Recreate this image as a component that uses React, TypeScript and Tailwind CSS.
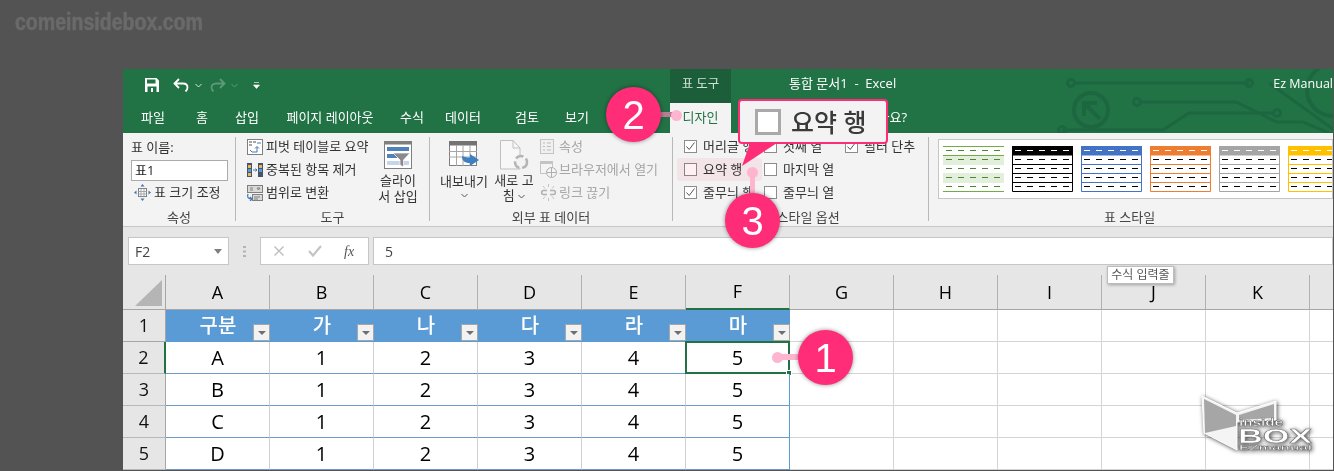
const tabs = [
  { label: '파일', w: 'w-[46px]' },
  { label: '홈', w: 'w-[52px]' },
  { label: '삽입', w: 'w-[38px]' },
  { label: '페이지 레이아웃', w: 'w-[128px]' },
  { label: '수식', w: 'w-[36px]' },
  { label: '데이터', w: 'w-[66px]' },
  { label: '검토', w: 'w-[62px]' },
  { label: '보기', w: 'w-[38px]' },
];

const columns = ['A', 'B', 'C', 'D', 'E', 'F', 'G', 'H', 'I', 'J', 'K', ''];
const headers = ['구분', '가', '나', '다', '라', '마'];
const rows = [
  ['A', '1', '2', '3', '4', '5'],
  ['B', '1', '2', '3', '4', '5'],
  ['C', '1', '2', '3', '4', '5'],
  ['D', '1', '2', '3', '4', '5'],
];

const styles = [
  { line: '#70ad47', head: 'none', dash: '#548235', band: true },
  { line: '#000000', head: '#000000', dash: '#000000', band: false },
  { line: '#4472c4', head: '#4472c4', dash: '#000000', band: false },
  { line: '#ed7d31', head: '#ed7d31', dash: '#000000', band: false },
  { line: '#a5a5a5', head: '#a5a5a5', dash: '#000000', band: false },
  { line: '#ffc000', head: '#ffc000', dash: '#000000', band: false },
];

const StyleThumb = ({ line, head, dash, band }: { line: string; head: string; dash: string; band: boolean }) => {
  const ys = [4.5, 13.5, 22.5, 31.5, 40.5];
  return (
    <svg width="61" height="46" viewBox="0 0 61 46" className="shrink-0">
      {band ? (
        <>
          <rect x="0" y="9" width="61" height="10" fill="#e2efda" />
          <rect x="0" y="27" width="61" height="10" fill="#e2efda" />
          <path d="M0 .5H61M0 9.5H61M0 45.5H61" stroke={line} fill="none" />
        </>
      ) : (
        <>
          <rect x="0" y="0" width="61" height="9.5" fill={head} />
          <path d="M.5 .5V45.5H60.5V.5M0 18.5H61M0 27.5H61M0 36.5H61" stroke={line} fill="none" />
        </>
      )}
      {ys.map((y, i) => (
        <path
          key={y}
          d={`M3 ${y}H9M15 ${y}H21M27 ${y}H33M39 ${y}H45M51 ${y}H57`}
          stroke={i === 0 && !band ? '#ffffff' : dash}
          fill="none"
        />
      ))}
    </svg>
  );
};

const CheckBox = ({ checked }: { checked?: boolean }) => (
  <span className="flex h-[13px] w-[13px] shrink-0 items-center justify-center border border-[#8c8c8c] bg-white">
    {checked && (
      <svg width="11" height="11" viewBox="0 0 11 11">
        <path d="M1.5 5.5 4.2 8.5 9.5 1.5" stroke="#555555" strokeWidth="1" fill="none" />
      </svg>
    )}
  </span>
);

const CheckOption = ({ label, checked, w }: { label: string; checked?: boolean; w: string }) => (
  <div className={`flex h-[23px] items-center gap-[6px] text-[13px] text-[#333333] ${w}`}>
    <CheckBox checked={checked} />
    <span className="pt-px whitespace-nowrap">{label}</span>
  </div>
);

const Separator = () => <div className="mt-1 h-[84px] w-px shrink-0 bg-[#b8b8b8]" />;

const GroupLabel = ({ children }: { children: React.ReactNode }) => (
  <div className="mt-auto flex h-[19px] shrink-0 items-center justify-center pt-[3px] text-[13px] text-[#444444]">{children}</div>
);

const PivotIcon = () => (
  <svg width="16" height="16" viewBox="0 0 16 16">
    <rect x=".5" y=".5" width="15" height="15" fill="#fff" stroke="#7f7f7f" />
    <rect x="2" y="2" width="3" height="2" fill="#a6a6a6" />
    <rect x="6" y="2" width="3" height="2" fill="#a6a6a6" />
    <rect x="2" y="5" width="3" height="2" fill="#a6a6a6" />
    <path d="M5 13H10V8M8 9.5 10 7.5 12 9.5M10 4H14M3 11 5 13" stroke="#3f78b5" fill="none" />
  </svg>
);

const DuplicateIcon = () => (
  <svg width="16" height="14" viewBox="0 0 16 14">
    <rect x="0" y="0" width="5" height="14" fill="#44546a" />
    <rect x="11" y="0" width="5" height="14" fill="#44546a" />
    <rect x="1" y="2" width="3" height="3" fill="#e9b55f" />
    <rect x="1" y="6" width="3" height="3" fill="#5b9bd5" />
    <rect x="1" y="10" width="3" height="3" fill="#e9b55f" />
    <rect x="12" y="2" width="3" height="3" fill="#e9b55f" />
    <rect x="12" y="6" width="3" height="3" fill="#5b9bd5" />
    <path d="M6 7H10M8.5 5.5 10 7 8.5 8.5" stroke="#3f78b5" fill="none" />
  </svg>
);

const ConvertIcon = () => (
  <svg width="16" height="16" viewBox="0 0 16 16">
    <rect x=".5" y=".5" width="15" height="7" fill="#d9d9d9" stroke="#7f7f7f" />
    <path d="M3 3H6M3 5H6M10 3H13L11.5 5Z" stroke="#7f7f7f" fill="none" />
    <rect x="5.5" y="9.5" width="10" height="6" fill="#d9d9d9" stroke="#7f7f7f" />
    <path d="M7 12H13M7 14H11" stroke="#7f7f7f" />
    <path d="M1 9C0 12 1 14 5 14M3 12 5 14 3 16" stroke="#3f78b5" fill="none" strokeWidth="1.2" />
  </svg>
);

const ResizeIcon = () => (
  <svg width="17" height="17" viewBox="0 0 17 17">
    <rect x="4.5" y="4.5" width="8" height="8" fill="#fff" stroke="#7f7f7f" />
    <path d="M4.5 7.5H12.5M4.5 10H12.5M7 4.5V12.5M10 4.5V12.5" stroke="#a6a6a6" />
    <path d="M8.5 0 6.5 2.5H10.5ZM8.5 17 6.5 14.5H10.5ZM0 8.5 2.5 6.5V10.5ZM17 8.5 14.5 6.5V10.5Z" fill="#3f78b5" />
  </svg>
);

const SlicerIcon = () => (
  <svg width="28" height="28" viewBox="0 0 28 28">
    <rect x=".5" y=".5" width="27" height="27" fill="#fff" stroke="#7f7f7f" />
    <rect x="0" y="0" width="28" height="3.5" fill="#7f7f7f" />
    <rect x="3" y="6" width="22" height="4" fill="#4f81bd" />
    <rect x="3" y="13" width="10" height="4" fill="#4f81bd" />
    <rect x="3" y="20" width="22" height="4" fill="#c5d6ea" />
    <path d="M9 12H26L19.5 19V26L16 24V19Z" fill="#8a8a8a" stroke="#fff" strokeWidth=".7" />
  </svg>
);

const ExportIcon = () => (
  <svg width="31" height="26" viewBox="0 0 31 26">
    <rect x=".5" y=".5" width="27" height="24" fill="#fff" stroke="#7f7f7f" />
    <rect x="0" y="0" width="28" height="4.5" fill="#737373" />
    <path d="M0 10.5H28M0 16H28M7.5 4V25M14 4V25M21 4V25" stroke="#a6a6a6" fill="none" />
    <path d="M13 15C13 21 17 22 21 22V25L30 19 21 13V16.5C18 16.5 16 16 13 15Z" fill="#3f7fc1" />
  </svg>
);

const RefreshIcon = () => (
  <svg width="29" height="30" viewBox="0 0 29 30">
    <path d="M.5 .5H13L20 8V29H.5Z" fill="#f7f7f7" stroke="#bfbfbf" />
    <path d="M13 .5V8H20" stroke="#bfbfbf" fill="none" />
    <circle cx="21" cy="22" r="6" fill="#f3f3f3" stroke="#b4b4b4" strokeWidth="2.5" strokeDasharray="8 3" />
  </svg>
);

const FormIcon = () => (
  <svg width="14" height="15" viewBox="0 0 14 15">
    <rect x=".5" y=".5" width="13" height="14" fill="#f0f0f0" stroke="#c4c4c4" />
    <path d="M3 4H5M7 4H11M3 7.5H5M7 7.5H11M3 11H5M7 11H11" stroke="#bdbdbd" />
  </svg>
);

const BrowserIcon = () => (
  <svg width="17" height="17" viewBox="0 0 17 17">
    <rect x=".5" y=".5" width="12" height="12" fill="#f4f4f4" stroke="#c4c4c4" />
    <rect x="0" y="0" width="13" height="3" fill="#c4c4c4" />
    <circle cx="11.5" cy="11.5" r="5" fill="#f4f4f4" stroke="#b0b0b0" />
    <path d="M6.5 11.5H16.5M11.5 6.5V16.5" stroke="#b0b0b0" />
  </svg>
);

const UnlinkIcon = () => (
  <svg width="17" height="17" viewBox="0 0 17 17">
    <path d="M8.5 0V3M3 2 5 4.5M14 2 12 4.5M8.5 14V17M3 15 5 12.5M14 15 12 12.5" stroke="#c4c4c4" fill="none" />
    <path d="M7 6.5H3.5C1 6.5 1 10.5 3.5 10.5H7M10 6.5H13.5C16 6.5 16 10.5 13.5 10.5H10" stroke="#b0b0b0" strokeWidth="1.5" fill="none" />
  </svg>
);

const SmallChevron = () => (
  <svg width="7" height="5" viewBox="0 0 7 5" className="inline-block">
    <path d="M.5 1 3.5 4 6.5 1" stroke="#555555" fill="none" />
  </svg>
);

const QuickAccess = () => (
  <div className="flex w-[547px] items-center pb-[2px] pl-[22px]">
    <svg width="14" height="14" viewBox="0 0 14 14">
      <path d="M0 0H11.5L14 2.5V14H0Z" fill="#fff" />
      <rect x="2" y="1.5" width="8.5" height="4" fill="#217346" />
      <rect x="2.5" y="8.5" width="9" height="5.5" fill="#217346" />
      <rect x="6" y="10" width="2" height="4" fill="#fff" />
    </svg>
    <svg width="16" height="14" viewBox="0 0 16 14" className="ml-[14px]">
      <path d="M6 1 1.5 5.5 6 10M2 5.5H10C13 5.5 14.5 7.5 14.5 9.5 14.5 11.5 13.5 12.5 12.5 13.5" stroke="#fff" strokeWidth="1.8" fill="none" />
    </svg>
    <svg width="7" height="5" viewBox="0 0 7 5" className="ml-[6px]">
      <path d="M.5 1 3.5 4 6.5 1" stroke="#d8e8de" fill="none" />
    </svg>
    <svg width="16" height="14" viewBox="0 0 16 14" className="ml-[8px]">
      <path d="M10 1 14.5 5.5 10 10M14 5.5H6C3 5.5 1.5 7.5 1.5 9.5 1.5 11.5 2.5 12.5 3.5 13.5" stroke="#5c9a78" strokeWidth="1.8" fill="none" />
    </svg>
    <svg width="7" height="5" viewBox="0 0 7 5" className="ml-[5px]">
      <path d="M.5 1 3.5 4 6.5 1" stroke="#5c9a78" fill="none" />
    </svg>
    <svg width="7" height="7" viewBox="0 0 7 7" className="ml-[15px]">
      <path d="M1 .5H6M.5 3H6.5L3.5 6.5Z" stroke="#fff" fill="#fff" strokeWidth=".6" />
    </svg>
  </div>
);

const CircuitArt = () => (
  <svg width="280" height="64" viewBox="0 0 280 64" className="absolute top-0 right-0">
    <g stroke="#1c6740" strokeWidth="3" fill="none">
      <path d="M21 14H196M216 14 280 60" />
      <circle cx="18" cy="14" r="3.5" />
      <circle cx="196" cy="14" r="3.5" />
      <circle cx="84" cy="33" r="3.5" />
      <path d="M88 33H183L224 53H250L276 64" />
      <circle cx="224" cy="44" r="3.5" />
      <path d="M9 61H110L136 44H222" />
      <circle cx="9" cy="61" r="3.5" />
      <circle cx="38" cy="41" r="17" strokeWidth="4" />
      <path d="M47 50 33 36M31 47V34H44" strokeWidth="4" />
      <circle cx="280" cy="21" r="26" strokeWidth="4" />
    </g>
  </svg>
);

const Callout = () => (
  <>
    <svg width="60" height="30" viewBox="0 0 60 30" className="absolute top-[140px] left-[735px]">
      <path d="M15 3H42L7 26Z" fill="#ff2d78" />
    </svg>
    <div className="absolute top-[99px] left-[738px] flex h-[45px] w-[150px] items-center rounded-[4px] border-2 border-[#ff2d78] bg-[#f3f3f3] pl-[15px]">
      <span className="h-[26px] w-[26px] border-[3px] border-[#a9a9a9] bg-white blur-[0.4px]" />
      <span className="ml-[10px] pt-[2px] text-[25px] font-medium whitespace-nowrap text-[#3a3a3a] blur-[0.4px]">요약 행</span>
    </div>
  </>
);

const Badge = ({ n, pos }: { n: string; pos: string }) => (
  <div
    className={`absolute flex h-[55px] w-[55px] items-center justify-center rounded-full bg-[#ff2d78] font-['Liberation_Sans',sans-serif] text-[40px] leading-none text-white shadow-[0_0_4px_rgba(0,0,0,0.45)] ${pos}`}
  >
    {n}
  </div>
);

const Annotations = () => (
  <>
    <div className="absolute top-[158px] left-[677px] h-[23px] w-[85px] rounded-[3px] bg-[#fff0f4] mix-blend-multiply" />
    <Callout />

    <div className="absolute top-[112px] left-[660px] h-[5px] w-[16px] bg-[#b87d93]" />
    <div className="absolute top-[110px] left-[671px] h-[11px] w-[11px] rounded-full bg-[#ffb5cf]" />
    <Badge n="2" pos="top-[87px] left-[606px]" />

    <div className="absolute top-[172px] left-[750px] h-[25px] w-[5px] bg-[#ffb5cf]" />
    <div className="absolute top-[167px] left-[747px] h-[11px] w-[11px] rounded-full bg-[#ffb5cf]" />
    <Badge n="3" pos="top-[193px] left-[725px]" />

    <div className="absolute top-[354px] left-[777px] h-[6px] w-[24px] bg-[#ffb5cf]" />
    <div className="absolute top-[352px] left-[772px] h-[11px] w-[11px] rounded-full bg-[#ffb5cf]" />
    <Badge n="1" pos="top-[330px] left-[798px]" />

    <div className="absolute top-[266px] left-[1107px] flex h-[18px] w-[67px] items-center justify-center border border-[#bdbdbd] bg-white text-[12px] whitespace-nowrap text-[#575757] shadow-[1px_1px_3px_rgba(0,0,0,0.3)]">
      수식 입력줄
    </div>

    <svg width="125" height="65" viewBox="0 0 125 65" className="absolute top-[390px] left-[1195px] drop-shadow-[1px_1px_2px_rgba(0,0,0,0.7)]">
      <path d="M7 6 42 23 81 11V30L42 32V60L9 43Z" fill="#f4f4f4" stroke="#fff" strokeWidth="1" />
      <path d="M9 9 41 25V36L10 43Z" fill="#a6a6a6" />
      <path d="M44 25 79 14V28L44 30Z" fill="#a6a6a6" />
      <g fontFamily="'Liberation Sans', sans-serif" fontWeight="700" fill="#fff" stroke="#777777" strokeWidth=".5">
        <text x="44" y="36" fontSize="10" textLength="44" lengthAdjust="spacingAndGlyphs">inside</text>
        <text x="43" y="53" fontSize="21" textLength="74" lengthAdjust="spacingAndGlyphs">BOX</text>
        <text x="44" y="60" fontSize="8" textLength="73" lengthAdjust="spacingAndGlyphs">EZmanual</text>
      </g>
    </svg>
  </>
);

const Ribbon = () => (
  <div className="flex h-[94px] shrink-0 border-b border-[#c6c6c6] bg-[#f3f3f3]">
    {/* 속성 */}
    <div className="flex w-[112px] flex-col">
      <div className="flex h-[27px] items-center pt-[3px] pl-2 text-[13px] text-[#333333]">표 이름:</div>
      <div className="ml-2 flex h-[21px] w-[97px] items-center border border-[#ababab] bg-white pl-[3px] text-[13px] text-[#222222]">
        표1
      </div>
      <div className="flex h-[22px] items-center gap-[3px] pl-[11px] text-[13px] text-[#333333]">
        <ResizeIcon />
        <span className="pt-px">표 크기 조정</span>
      </div>
      <GroupLabel>속성</GroupLabel>
    </div>
    <Separator />

    {/* 도구 */}
    <div className="flex w-[193px] flex-col">
      <div className="flex">
        <div className="w-[138px] pt-[2px] pl-[11px]">
          {[
            { icon: <PivotIcon />, label: '피벗 테이블로 요약' },
            { icon: <DuplicateIcon />, label: '중복된 항목 제거' },
            { icon: <ConvertIcon />, label: '범위로 변환' },
          ].map((item) => (
            <div key={item.label} className="flex h-[23px] items-center text-[13px] whitespace-nowrap text-[#333333]">
              <span className="flex w-[19px] shrink-0 items-center">{item.icon}</span>
              <span className="pt-px">{item.label}</span>
            </div>
          ))}
        </div>
        <div className="flex w-[48px] flex-col items-center pt-[8px] text-[13px] leading-[16px] text-[#333333]">
          <SlicerIcon />
          <span className="mt-[3px] whitespace-nowrap">슬라이</span>
          <span className="whitespace-nowrap">서 삽입</span>
        </div>
      </div>
      <GroupLabel>도구</GroupLabel>
    </div>
    <Separator />

    {/* 외부 표 데이터 */}
    <div className="flex w-[242px] flex-col">
      <div className="flex">
        <div className="ml-[10px] flex w-[48px] flex-col items-center pt-[8px] text-[13px] leading-[15px] text-[#333333]">
          <ExportIcon />
          <span className="mt-[7px] whitespace-nowrap">내보내기</span>
          <span className="mt-[4px] flex"><SmallChevron /></span>
        </div>
        <div className="ml-[6px] flex w-[40px] flex-col items-center pt-[7px] text-[13px] leading-[15px] text-[#333333]">
          <RefreshIcon />
          <span className="mt-[3px] whitespace-nowrap">새로 고</span>
          <span className="whitespace-nowrap">
            침 <SmallChevron />
          </span>
        </div>
        <div className="ml-[6px] pt-[2px]">
          {[
            { icon: <FormIcon />, label: '속성' },
            { icon: <BrowserIcon />, label: '브라우저에서 열기' },
            { icon: <UnlinkIcon />, label: '링크 끊기' },
          ].map((item) => (
            <div key={item.label} className="flex h-[23px] items-center text-[13px] whitespace-nowrap text-[#a6a6a6]">
              <span className="flex w-[19px] shrink-0 items-center">{item.icon}</span>
              <span className="pt-px">{item.label}</span>
            </div>
          ))}
        </div>
      </div>
      <GroupLabel>외부 표 데이터</GroupLabel>
    </div>
    <Separator />

    {/* 표 스타일 옵션 */}
    <div className="flex w-[255px] flex-col">
      <div className="flex pt-[2px] pl-[11px]">
        <div className="w-[80px]">
          <CheckOption label="머리글 행" checked w="w-[80px]" />
          <CheckOption label="요약 행" w="w-[80px]" />
          <CheckOption label="줄무늬 행" checked w="w-[80px]" />
        </div>
        <div className="w-[81px]">
          <CheckOption label="첫째 열" w="w-[81px]" />
          <CheckOption label="마지막 열" w="w-[81px]" />
          <CheckOption label="줄무늬 열" w="w-[81px]" />
        </div>
        <CheckOption label="필터 단추" checked w="w-[80px]" />
      </div>
      <GroupLabel>표 스타일 옵션</GroupLabel>
    </div>
    <Separator />

    {/* 표 스타일 */}
    <div className="flex min-w-0 flex-1 flex-col pl-[9px]">
      <div className="mt-[6px] flex h-[60px] gap-2 overflow-hidden border border-[#c6c6c6] bg-white pt-[6px] pl-1">
        {styles.map((s) => (
          <StyleThumb key={s.line} {...s} />
        ))}
      </div>
      <GroupLabel>
        <span className="pr-[12px]">표 스타일</span>
      </GroupLabel>
    </div>
  </div>
);

const FormulaBar = () => (
  <div className="flex h-[48px] shrink-0 items-start bg-[#e6e6e6] pt-[10px] pl-[5px]">
    <div className="flex h-[28px] w-[101px] items-center justify-between border border-[#c6c6c6] bg-white px-[6px] text-[14px] text-[#444444]">
      F2
      <svg width="8" height="5" viewBox="0 0 8 5">
        <path d="M0 0H8L4 5Z" fill="#7f7f7f" />
      </svg>
    </div>
    <div className="flex h-[28px] w-[31px] items-center justify-center">
      <svg width="3" height="11" viewBox="0 0 3 11">
        <path d="M0 0H3V2H0ZM0 4.5H3V6.5H0ZM0 9H3V11H0Z" fill="#b3b3b3" />
      </svg>
    </div>
    <div className="flex h-[28px] w-[109px] items-center border border-[#c6c6c6] bg-white pl-[13px]">
      <svg width="10" height="10" viewBox="0 0 10 10">
        <path d="M.5 .5 9.5 9.5M9.5 .5 .5 9.5" stroke="#bdbdbd" strokeWidth="1.4" />
      </svg>
      <svg width="14" height="12" viewBox="0 0 14 12" className="ml-[24px]">
        <path d="M1 6 5 10.5 13 1" stroke="#c4c4c4" strokeWidth="2.2" fill="none" />
      </svg>
      <span className="ml-[22px] font-['Liberation_Serif',serif] text-[14px] font-medium text-[#555555] italic">fx</span>
    </div>
    <div className="ml-1 flex h-[28px] flex-1 items-center border border-[#c6c6c6] bg-white pl-[11px] text-[14px] text-[#444444]">5</div>
  </div>
);

const Sheet = () => (
  <div className="flex flex-1 flex-col overflow-hidden">
    {/* column headers */}
    <div className="flex h-[35px] shrink-0">
      <div className="flex w-[43px] shrink-0 items-end justify-end border-r border-b border-[#a6a6a6] bg-[#e6e6e6] pr-[3px] pb-[3px]">
        <svg width="27" height="26" viewBox="0 0 27 26">
          <path d="M27 0V26H0Z" fill="#b5b5b5" />
        </svg>
      </div>
      {columns.map((c) => (
        <div
          key={c || 'L'}
          className={`flex w-[104px] shrink-0 items-center justify-center border-r border-[#b1b1b1] bg-[#e6e6e6] text-[18px] text-black ${
            c === 'F' ? 'border-b-2 border-b-[#217346]' : 'border-b border-b-[#a6a6a6]'
          }`}
        >
          {c}
        </div>
      ))}
    </div>

    {/* row 1, the table header */}
    <div className="flex h-8 shrink-0">
      <div className="flex w-[43px] shrink-0 items-center justify-center border-r border-b border-[#a6a6a6] bg-[#e6e6e6] text-[18px] text-[#111111]">1</div>
      {headers.map((h) => (
        <div
          key={h}
          className="relative flex w-[104px] shrink-0 items-center justify-center bg-[#5b9bd5] text-[20px] font-medium text-white"
        >
          {h}
          <span className="absolute right-0 bottom-[1px] flex h-[17px] w-[17px] items-center justify-center border border-[#a6a6a6] bg-[#f2f2f2]">
            <svg width="8" height="4" viewBox="0 0 8 4">
              <path d="M0 0H8L4 4Z" fill="#6e6e6e" />
            </svg>
          </span>
        </div>
      ))}
      {columns.slice(6).map((c) => (
        <div key={c || 'L'} className="w-[104px] shrink-0 border-r border-b border-[#d4d4d4] bg-white" />
      ))}
    </div>

    {/* rows 2 to 5 */}
    {rows.map((row, r) => (
      <div key={r} className="flex h-8 shrink-0">
        <div
          className={`flex w-[43px] shrink-0 items-center justify-center border-b border-[#b8b8b8] bg-[#e6e6e6] text-[18px] text-[#111111] ${
            r === 0 ? 'border-r-2 border-r-[#217346]' : 'border-r border-r-[#a6a6a6]'
          }`}
        >
          {r + 2}
        </div>
        {row.map((v, i) => (
          <div
            key={i}
            className={`relative flex w-[104px] shrink-0 items-center justify-center border-b border-b-[#6a9ccb] bg-white text-[20px] text-black ${
              i === 5 ? 'border-r border-r-[#5b9bd5]' : 'border-r border-r-[#d0d0d0]'
            }`}
          >
            {v}
            {r === 0 && i === 5 && (
              <>
                <span className="absolute -top-px -right-px -bottom-px -left-px border-2 border-[#217346]" />
                <span className="absolute -right-[3px] -bottom-[3px] h-[6px] w-[6px] border border-white bg-[#217346]" />
              </>
            )}
          </div>
        ))}
        {columns.slice(6).map((c) => (
          <div key={c || 'L'} className="w-[104px] shrink-0 border-r border-b border-[#d4d4d4] bg-white" />
        ))}
      </div>
    ))}
  </div>
);

export default function App() {
  return (
    <div className="relative h-[471px] w-[1334px] overflow-hidden bg-[#535353] pt-[69px] pr-px pb-px pl-[123px] font-['Open_Sans','Noto_Sans_CJK_KR',sans-serif]">
      <div className="absolute top-[5px] left-[15px] origin-left scale-x-[0.85] font-['Liberation_Sans',sans-serif] text-[23px] font-bold whitespace-nowrap text-[#6a6a6a] [-webkit-text-stroke:0.6px_#6a6a6a]">
        comeinsidebox.com
      </div>

      <div className="flex h-[401px] w-[1210px] flex-col overflow-hidden">
        <div className="relative h-[64px] shrink-0 bg-[#217346]">
          <CircuitArt />
          <div className="relative flex h-[34px] items-center text-[13px] text-white">
            <QuickAccess />
            <div className="flex h-[34px] w-[61px] items-center justify-center bg-[#1b5e39] pb-1 text-[12.5px] text-[#cfe2d6]">표 도구</div>
            <div className="ml-[58px] pb-1 whitespace-nowrap">통합 문서1&nbsp; -&nbsp; Excel</div>
            <div className="ml-auto pb-1 text-[12.5px] whitespace-nowrap">Ez Manual</div>
          </div>
          <div className="relative flex h-[30px] items-center pl-[7px] text-[13px] text-white">
            {tabs.map((t) => (
              <div key={t.label} className={`text-center whitespace-nowrap ${t.w}`}>
                {t.label}
              </div>
            ))}
            <div className="ml-[74px] flex h-[30px] w-[61px] items-center justify-center bg-[#f3f3f3] text-[#217346]">디자인</div>
            <div className="w-[176px] text-right whitespace-nowrap">무엇을 도와드릴까요?</div>
          </div>
        </div>
        <Ribbon />
        <FormulaBar />
        <Sheet />
      </div>

      <Annotations />
    </div>
  );
}
